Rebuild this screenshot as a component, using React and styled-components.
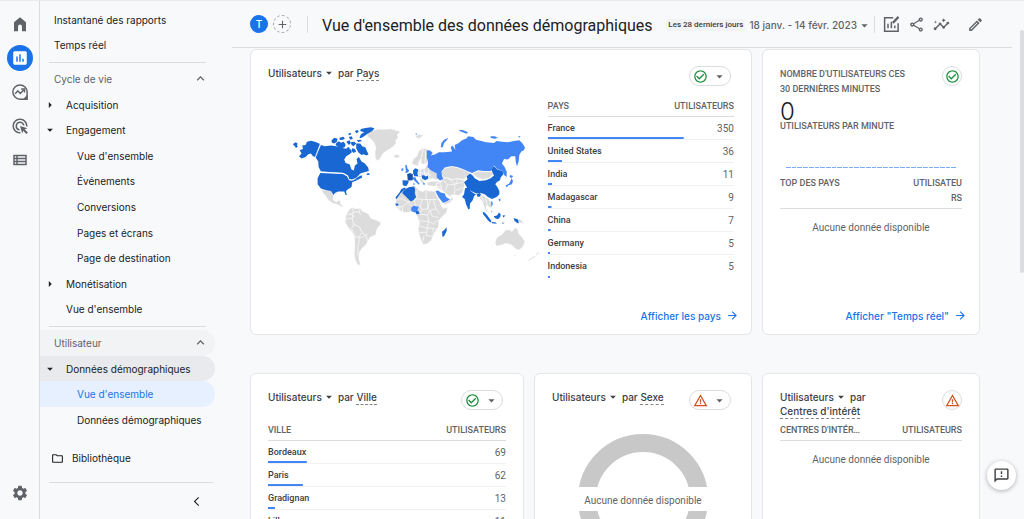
import React from 'react'
import styled, { createGlobalStyle } from 'styled-components'
import {
  MdInsertChart,
  MdAdsClick,
  MdOutlineViewList,
  MdSettings,
  MdOutlineShare,
  MdInsights,
  MdOutlineEdit,
  MdOutlineFeedback,
  MdOutlineFolder,
  MdArrowForward,
  MdCheckCircleOutline,
  MdWarningAmber,
  MdExpandLess,
  MdArrowDropDown,
  MdArrowRight,
  MdArrowBackIosNew,
  MdAdd,
} from 'react-icons/md'

const menu = [
  { label: 'Instantané des rapports', level: 0 },
  { label: 'Temps réel', level: 0 },
  { divider: true },
  { label: 'Cycle de vie', section: true },
  { label: 'Acquisition', level: 1, arrow: 'closed' },
  { label: 'Engagement', level: 1, arrow: 'open' },
  { label: "Vue d'ensemble", level: 2 },
  { label: 'Événements', level: 2 },
  { label: 'Conversions', level: 2 },
  { label: 'Pages et écrans', level: 2 },
  { label: 'Page de destination', level: 2 },
  { label: 'Monétisation', level: 1, arrow: 'closed' },
  { label: "Vue d'ensemble", level: 1 },
  { divider: true },
  { label: 'Utilisateur', section: true, tone: '#f1f3f4' },
  { label: 'Données démographiques', level: 1, arrow: 'open', tone: '#e8eaed' },
  { label: "Vue d'ensemble", level: 2, tone: '#e6f0fe', active: true },
  { label: 'Données démographiques', level: 2 },
]

const countries = [
  { name: 'France', users: 350 },
  { name: 'United States', users: 36 },
  { name: 'India', users: 11 },
  { name: 'Madagascar', users: 9 },
  { name: 'China', users: 7 },
  { name: 'Germany', users: 5 },
  { name: 'Indonesia', users: 5 },
]

const cities = [
  { name: 'Bordeaux', users: 69 },
  { name: 'Paris', users: 62 },
  { name: 'Gradignan', users: 13 },
  { name: 'Lille', users: 11 },
]

const HomeIcon = () => (
  <svg width="18" height="18" viewBox="0 0 24 24" fill="currentColor" aria-hidden="true">
    <path d="M4 21.500V9.600L12 3l8 6.600V21.500h-5.400v-6.300a2.600 2.600 0 0 0-5.200 0v6.300z" />
  </svg>
)

const ExploreIcon = () => (
  <svg width="18" height="18" viewBox="0 0 24 24" fill="none" stroke="currentColor" strokeWidth="2" aria-hidden="true">
    <path d="M12 21.500A9.500 9.500 0 1 1 21.500 12v9.500z" />
    <path d="M5.500 14.500l3.500-4 3.500 3.500 4.500-5" />
    <path d="M13.500 8h4.500v4.500" />
    <path d="M16 21.500l5.500-5.500v5.500z" fill="currentColor" stroke="none" />
  </svg>
)

const CustomizeIcon = () => (
  <svg width="18" height="18" viewBox="0 0 24 24" fill="none" stroke="currentColor" strokeWidth="2" aria-hidden="true">
    <path d="M15 3.500H3.500v18h18V11" />
    <path d="M8 17.500v-6M12.500 17.500V9M17 17.500v-3.500" />
    <path d="M14.500 10.500l7.500-8" strokeWidth="3" />
  </svg>
)

const WorldMap = () => (
  <MapSvg viewBox="-39 0 840 480" role="img" aria-label="Utilisateurs par pays">
    <g fill="#dcdcdc" stroke="#fff" strokeWidth="2">
      <path d="M258 56 262 50 276 46 292 42 310 43 330 41 346 46 361 50 350 58 352 68 345 76 346 86 336 96 322 105 308 114 302 124 296 134 288 138 283 128 282 112 285 98 280 84 270 72 260 66z" />
      <path d="M338 122l8-3 9 1 2 5-8 5-9-3z" />
      <path d="M402 64l12-6 14 2-8 8-6 4-6-4z" />
      <path d="M120 222 132 226 148 226 158 240 157 254 165 262 174 256 180 257 178 266 186 274 184 278 172 270 156 266 142 256 136 246 126 234z" />
      <path d="M204 284 214 277 222 281 238 280 246 290 262 296 270 310 288 316 300 322 299 330 289 342 285 360 268 368 262 378 254 392 244 400 236 412 234 430 240 452 230 450 223 436 220 416 222 392 220 366 212 350 200 336 192 320 194 306z" />
      <path d="M392 146 398 132 408 124 414 108 426 100 438 101 443 108 440 120 443 140 432 149 420 146 421 132 414 142 412 154 404 152 398 148z" />
      <path d="M406 162 416 164 432 160 438 150 448 156 454 166 468 176 480 184 476 194 464 194 454 190 448 194 444 186 434 180 424 184 410 178z" />
      <path d="M396 176l12 2 16 6-6 4-16-3zM416 190l10 2 6 14-6 2-8-10z" />
      <path d="M438 203l14-4 16 0 16 4-4 8-12 1-6 3-22-3z" />
      <path d="M364 222 384 216 404 213 412 224 426 230 434 225 448 228 462 229 470 246 480 266 486 280 501 278 498 292 484 306 474 318 474 334 466 348 458 362 452 376 440 387 428 390 422 380 414 358 412 342 416 326 410 306 404 296 394 290 372 294 356 288 343 270 346 252 356 236z" />
      <path d="M466 206 480 204 484 192 500 188 512 194 528 190 550 196 552 210 546 232 534 242 516 240 506 244 494 234 480 224 468 218z" />
      <path d="M486 263 508 256 510 244 518 252 508 264 492 270z" />
      <path d="M480 172 492 160 512 155 530 158 546 164 564 170 568 178 556 186 550 194 530 191 514 194 498 188 488 190z" />
      <path d="M574 176 592 168 610 170 632 170 638 178 624 190 606 194 588 188z" />
      <path d="M596 238 610 242 622 250 630 262 636 274 630 280 620 272 616 274 618 284 624 292 616 290 610 276 604 260 598 252z" />
      <path d="M713 312l10 4 8 11-8-2-10-1z" />
      <path d="M643 384 648 368 664 358 674 346 686 344 694 350 704 337 712 344 714 356 726 368 733 380 728 394 716 406 704 402 692 390 676 386 660 392 646 394z" />
      <path d="M698 420l8 1-3 6z" />
    </g>
    <g fill="none" stroke="#fff" strokeWidth="2">
      <path d="M214 280l4 12-16 10M218 292l20-2M238 282l-4 12 8 6M192 314l22-4 4-18M214 310l4 18 18 8 8 18 12 8 4 16M218 328l-6 14 12 24M222 366l20 2 18-10M236 372l-4 20-2 30M206 296l14 10M242 354l-10 16" />
      <path d="M346 252l20 0 16 10 26-10 28 2 0-26M410 226l-2 26M436 254l34 0M344 272l20 4 18-14M364 276l2 16M382 262l10 12 26 0 6-20M418 274l6 10 16-2 10-28M424 284l-8 14 24 2 8-14 18-4-8-28M440 300l4 20-30-2M444 320l14 8 14-14M416 334l24 6 4-20M440 340l14 0 16 4M440 340l-4 22 16 2M414 354l24-2M430 364l-4 16M452 364l8-4-4-18M466 282l10 14M448 286l6 18 20 4M404 298l14-2M356 276l2 12M440 254l2 30M400 250l4 22" />
      <path d="M418 164l2 18M430 162l2 18 18 2M446 156l-6 26M410 174l20 0 20 4M428 100l-8 34M436 104l-4 44" />
      <path d="M478 206l6 18M484 192l16 18 22-2 0 32M500 210l-6 18M522 208l24-6M504 192l18 14M530 192l-4 14M526 226l20-8M466 212l16 6M602 242l8 20M614 246l6 24" />
    </g>
    <g fill="#1967d2">
      <path d="M54 124 62 116 56 106 66 102 64 92 74 90 78 80 90 77 102 80 118 87 103 126 96 124 90 116 82 118 74 126 62 131zM38 86l6-4 6 4-2 5 3 4-6 4-4-6-5-4z" />
      <path d="M120 90 132 94 150 92 166 94 184 99 200 102 210 103 213 112 206 118 196 124 190 134 194 144 206 148 212 164 219 167 222 152 230 146 227 132 234 126 242 140 252 146 262 158 264 168 250 172 238 176 228 188 214 194 205 192 201 182 188 174 120 170 113 156 112 140 104 128z" />
      <path d="M226 86 238 86 244 94 254 98 258 108 263 118 257 122 248 118 242 120 232 112 226 100zM236 68 240 58 250 52 238 48 240 42 254 39 270 37 281 40 274 48 260 56 250 64 240 70zM166 84l8-5 6 4 8-3 6 8-2 8-8 4-10-2-10-8zM152 76l8-8 10 3-2 9-8 6-7-3zM196 80l10-4 4 8-6 6zM176 68l12-3 4 6-8 4-8-1zM204 66l8-2 4 7-8 3zM222 48l8-3 4 5-8 5zM210 82l10-2 6 6-8 8-6-4zM214 100l8 2 4 8-8 4-6-6zM196 100l8-4 3 6-7 4zM228 76l10-2 6 4-12 3zM202 56l8-3 1 5-7 3z" />
      <path d="M256 177l6-3 6 4-7 3z" />
      <path d="M118 174 186 177 198 184 206 196 216 196 228 188 242 180 244 188 228 196 214 202 212 216 200 224 195 230 198 240 194 240 190 230 172 230 162 234 158 240 150 228 136 226 120 221 110 208 110 190z" />
      <path d="M397 166 404 160 412 164 410 176 412 184 401 184 397 176zM365 196 384 197 382 206 376 214 366 211zM422 182l8-1 5 4 6-3 2 9-10 5-9-5z" />
      <path d="M364 234 372 224 384 217 400 215 403 224 402 236 406 246 398 256 390 260 378 248zM344 248l12-15 5-10 10-5 4 2-8 8-8 7-12 18zM343 267l9-1 1 6-7 1zM403 289l9-2 5 10-10 1zM484 350 490 346 497 337 498 348 490 364 485 366z" />
      <path d="M550 202 560 194 558 184 568 176 576 182 582 190 596 198 616 196 630 190 640 182 634 170 634 158 640 154 650 164 666 168 668 178 660 188 658 196 648 202 644 208 650 216 656 228 656 238 648 246 634 252 622 246 612 238 600 234 588 236 574 230 560 220z" />
      <path d="M553 220 564 218 570 228 580 236 586 238 580 244 576 256 568 266 567 282 563 284 556 268 552 252 544 246 550 238zM588 238l9-4 4 4-5 8-6-1z" />
      <path d="M606 291l6 2 8 9 6 8 6 8-2 5-8-6-6-8-8-10zM639 304l10-2 6-9 5 5-1 8-7 7-9-3zM632 321l14 2 2 4-14-2zM699 310l8 2 6 3 1 11-7-3-6-6zM666 301l8 1-6 7zM662 324l10 0-5 3z" />
    </g>
    <g fill="#4285f4">
      <path d="M438 106 448 107 456 114 450 122 464 118 474 112 492 112 514 110 510 98 514 92 520 98 524 106 522 90 532 86 544 76 558 70 562 64 578 66 586 74 602 78 616 82 640 84 648 78 664 80 682 82 700 78 716 76 726 86 733 98 730 106 722 110 716 120 714 140 709 155 705 138 704 124 692 124 682 134 670 132 664 146 672 156 678 170 678 186 670 180 666 168 650 162 640 152 632 168 610 168 592 166 574 174 560 168 546 162 530 156 512 153 492 158 482 170 484 184 488 192 478 197 468 188 468 176 450 166 440 156 442 140 438 128z" />
      <path d="M480 97 482 84 490 74 503 68 498 76 490 84 486 97zM536 44l12 2 14 6-4 4-12-4-10-4zM630 64l12 0 10 4-10 3-12-2zM404 54l5 2-3 4zM712 64l8 0-4 4z" />
      <path d="M373 150l5 1 2 10 5 6-3 6-8 1 1-9zM362 161l6-1-1 7-5 2zM396 187l8 0 2 6 7 9 4 5-4 2-8-8-8-8zM398 204l3 0 0 6-3 0zM428 203l4 2-1 6-4-3z" />
      <path d="M464 229l8-2 8 6 12 3 4 10 12 8-10 6-12 4-4-6-8-10zM391 279l7-6 10 2 6-1-2 8-5 9-7 1-8-3z" />
      <path d="M688 180l10 3-6 6-5-3zM693 190l4 8-3 10-10 3-6 6-3-5 11-6zM654 252l5-1 0 9-4-2zM630 258l6 4 0 8-5 4 1-9zM632 286l3 5-2 3zM631 246l5 1-3 4z" />
    </g>
    <path d="M379 178l8-4 9 4 0 8 0 9-7 2-8-1z" fill="#174ea6" />
    <path d="M118 86l-15 41M116 171l70 4 14 8 4 11 8 3 12-5 8-8 12-5 14-3" fill="none" stroke="#fff" strokeWidth="2" />
    <path d="M744 438l12-9 8-4M766 422l8-10" fill="none" stroke="#dcdcdc" strokeWidth="3" />
  </MapSvg>
)

const Status = ({ warning, menu }) => (
  <StatusButton type="button" $wide={menu} $warning={warning} aria-label="Qualité des données">
    {warning ? <MdWarningAmber size={15} /> : <MdCheckCircleOutline size={15} />}
    {menu && <MdArrowDropDown size={15} color="#5f6368" />}
  </StatusButton>
)

const CardHeader = ({ dimension, warning, menu = true }) => (
  <Header>
    <h2>
      <MetricButton type="button">
        Utilisateurs
        <MdArrowDropDown size={14} />
      </MetricButton>
      par <Dimension>{dimension}</Dimension>
    </h2>
    <Status warning={warning} menu={menu} />
  </Header>
)

const DataTable = ({ title, rows, total }) => (
  <Table>
    <thead>
      <tr>
        <th scope="col">{title}</th>
        <th scope="col">UTILISATEURS</th>
      </tr>
    </thead>
    <tbody>
      {rows.map(({ name, users }) => (
        <tr key={name} style={{ backgroundSize: `${(users / total) * 100}% 2px` }}>
          <td>{name}</td>
          <td>{users}</td>
        </tr>
      ))}
    </tbody>
  </Table>
)

export default function App() {
  return (
    <Page>
      <GlobalStyle />
      <Rail aria-label="Navigation principale">
        <RailLink href="#accueil" aria-label="Accueil"><HomeIcon /></RailLink>
        <RailLink href="#rapports" aria-label="Rapports" $active><MdInsertChart size={18} /></RailLink>
        <RailLink href="#explorer" aria-label="Explorer"><ExploreIcon /></RailLink>
        <RailLink href="#publicite" aria-label="Publicité"><MdAdsClick size={18} /></RailLink>
        <RailLink href="#configurer" aria-label="Configurer"><MdOutlineViewList size={18} /></RailLink>
        <RailLink href="#admin" aria-label="Administration" $last><MdSettings size={18} /></RailLink>
      </Rail>

      <Sidebar aria-label="Rapports">
        <Menu>
          {menu.map((item, index) => {
            if (item.divider) return <Divider key={index} role="separator" />
            return (
              <MenuItem key={index}>
                {item.section ? (
                  <SectionButton type="button" $tone={item.tone} aria-expanded="true">
                    {item.label}
                    <MdExpandLess size={15} />
                  </SectionButton>
                ) : (
                  <MenuLink href="#rapport" $level={item.level} $tone={item.tone} $active={item.active}>
                    <Arrow>
                      {item.arrow === 'open' && <MdArrowDropDown size={14} />}
                      {item.arrow === 'closed' && <MdArrowRight size={14} />}
                    </Arrow>
                    {item.label}
                  </MenuLink>
                )}
              </MenuItem>
            )
          })}
          <MenuItem $library>
            <LibraryLink href="#bibliotheque">
              <MdOutlineFolder size={13} />
              Bibliothèque
            </LibraryLink>
          </MenuItem>
        </Menu>
        <SidebarFooter>
          <IconButton type="button" aria-label="Réduire"><MdArrowBackIosNew size={11} /></IconButton>
        </SidebarFooter>
      </Sidebar>

      <Main>
        <TopBar>
          <Avatar>T</Avatar>
          <AddButton type="button" aria-label="Ajouter une comparaison"><MdAdd size={13} /></AddButton>
          <Rule />
          <h1>Vue d'ensemble des données démographiques</h1>
          <Badge>Les 28 derniers jours</Badge>
          <DateButton type="button">
            18 janv. - 14 févr. 2023
            <MdArrowDropDown size={15} />
          </DateButton>
          <Rule />
          <Tools>
            <IconButton type="button" aria-label="Personnaliser"><CustomizeIcon /></IconButton>
            <IconButton type="button" aria-label="Partager"><MdOutlineShare size={17} /></IconButton>
            <IconButton type="button" aria-label="Insights"><MdInsights size={17} /></IconButton>
          </Tools>
          <IconButton type="button" aria-label="Modifier"><MdOutlineEdit size={17} /></IconButton>
        </TopBar>

        <Cards>
          <Card $span={2}>
            <CardHeader dimension="Pays" />
            <MapLayout>
              <WorldMap />
              <DataTable title="PAYS" rows={countries} total={478} />
            </MapLayout>
            <CardLink href="#pays">
              Afficher les pays
              <MdArrowForward size={13} />
            </CardLink>
          </Card>

          <Card>
            <Header>
              <Caption as="h2">NOMBRE D'UTILISATEURS CES 30 DERNIÈRES MINUTES</Caption>
              <Status />
            </Header>
            <BigNumber>0</BigNumber>
            <Caption>UTILISATEURS PAR MINUTE</Caption>
            <Minutes>
              {Array.from({ length: 30 }, (_, i) => <i key={i} />)}
            </Minutes>
            <Table>
              <thead>
                <tr>
                  <th scope="col">TOP DES PAYS</th>
                  <th scope="col">UTILISATEU<br />RS</th>
                </tr>
              </thead>
            </Table>
            <Empty>Aucune donnée disponible</Empty>
            <CardLink href="#temps-reel">
              Afficher "Temps réel"
              <MdArrowForward size={13} />
            </CardLink>
          </Card>

          <Card>
            <CardHeader dimension="Ville" />
            <DataTable title="VILLE" rows={cities} total={423} />
          </Card>

          <Card>
            <CardHeader dimension="Sexe" warning />
            <Donut>
              <svg width="130" height="130" viewBox="0 0 130 130" aria-hidden="true">
                <circle cx="65" cy="65" r="56" fill="none" stroke="#c8c8c8" strokeWidth="18" />
              </svg>
              <span>Aucune donnée disponible</span>
            </Donut>
          </Card>

          <Card>
            <CardHeader dimension="Centres d'intérêt" warning menu={false} />
            <Table>
              <thead>
                <tr>
                  <th scope="col">CENTRES D'INTÉR…</th>
                  <th scope="col">UTILISATEURS</th>
                </tr>
              </thead>
            </Table>
            <Empty>Aucune donnée disponible</Empty>
          </Card>
        </Cards>
      </Main>

      <ScrollThumb />
      <Feedback type="button" aria-label="Commentaires"><MdOutlineFeedback size={17} /></Feedback>
    </Page>
  )
}

const GlobalStyle = createGlobalStyle`
  * {
    box-sizing: border-box;
  }
  body {
    margin: 0;
    background: #f8f9fb;
    color: #202124;
    font-family: Inter, Roboto, sans-serif;
    font-size: 10px;
  }
  h1, h2, p, ul {
    margin: 0;
    padding: 0;
    font-weight: 400;
  }
  button {
    padding: 0;
    border: 0;
    background: none;
    font: inherit;
    color: inherit;
    cursor: pointer;
  }
  a {
    color: inherit;
    text-decoration: none;
  }
  svg {
    flex-shrink: 0;
  }
`;

const Page = styled.div`
  position: relative;
  display: flex;
  height: 100vh;
  overflow: hidden;
  border-top: 1px solid #e8eaed;
`;

const Rail = styled.nav`
  display: flex;
  flex-direction: column;
  align-items: center;
  gap: 8px;
  flex: 0 0 40px;
  padding: 10px 0 13px;
  border-right: 1px solid #dadce0;
  color: #5f6368;
`;

const RailLink = styled.a`
  display: grid;
  place-items: center;
  width: 26px;
  height: 26px;
  border-radius: 50%;
  margin-top: ${({ $last }) => ($last ? 'auto' : '0')};
  background: ${({ $active }) => ($active ? '#1a73e8' : 'transparent')};
  color: ${({ $active }) => ($active ? '#fff' : 'inherit')};
`;

const Sidebar = styled.nav`
  display: flex;
  flex-direction: column;
  flex: 0 0 192px;
  padding: 6px 17px 0 0;
  font-weight: 500;
`;

const Menu = styled.ul`
  display: flex;
  flex-direction: column;
  flex: 1;
  list-style: none;
`;

const MenuItem = styled.li`
  display: flex;
  flex: 1 1 24px;
  margin-top: ${({ $library }) => ($library ? '13px' : '0')};
`;

const Divider = styled.li`
  height: 1px;
  margin: 4px 9px 3px;
  background: #dadce0;
`;

const MenuLink = styled.a`
  display: flex;
  align-items: center;
  flex: 1;
  padding-left: ${({ $level }) => [0, 12, 23][$level]}px;
  border-radius: 0 13px 13px 0;
  background: ${({ $tone }) => $tone || 'transparent'};
  color: ${({ $active }) => ($active ? '#1a73e8' : 'inherit')};
  white-space: nowrap;
`;

const Arrow = styled.span`
  display: flex;
  width: 14px;
  svg {
    margin-left: -9px;
  }
`;

const SectionButton = styled.button`
  display: flex;
  align-items: center;
  justify-content: space-between;
  flex: 1;
  padding: 0 7px 0 14px;
  border-radius: 0 13px 13px 0;
  background: ${({ $tone }) => $tone || 'transparent'};
  color: #5f6368;
`;

const LibraryLink = styled.a`
  display: flex;
  align-items: center;
  gap: 8px;
  padding-left: 11px;
`;

const SidebarFooter = styled.div`
  display: flex;
  justify-content: flex-end;
  margin: 11px 2px 0 9px;
  padding: 13px 11px 12px 0;
  border-top: 1px solid #dadce0;
  button {
    color: #202124;
  }
`;

const IconButton = styled.button`
  display: grid;
  place-items: center;
  color: #5f6368;
`;

const Main = styled.main`
  flex: 1;
  min-width: 0;
`;

const TopBar = styled.header`
  display: flex;
  align-items: center;
  height: 47px;
  margin-right: 12px;
  padding: 0 28px 0 18px;
  border-bottom: 1px solid #dadce0;
  h1 {
    margin: 0 auto 0 14px;
    padding-top: 4px;
    font-family: Roboto, sans-serif;
    font-size: 16px;
    line-height: 24px;
    white-space: nowrap;
  }
`;

const Avatar = styled.span`
  display: grid;
  place-items: center;
  flex: 0 0 18px;
  height: 18px;
  border-radius: 50%;
  background: #1a73e8;
  color: #fff;
  font-weight: 500;
`;

const AddButton = styled.button`
  display: grid;
  place-items: center;
  flex: 0 0 18px;
  height: 18px;
  margin: 0 16px 0 5px;
  border: 1px dashed #9aa0a6;
  border-radius: 50%;
  color: #5f6368;
`;

const Rule = styled.span`
  flex: 0 0 1px;
  height: 17px;
  background: #dadce0;
`;

const Badge = styled.span`
  margin-top: 2px;
  padding: 0 2px;
  border-radius: 2px;
  background: #f1f3f4;
  color: #3c4043;
  font-family: Roboto, sans-serif;
  font-size: 8px;
  font-weight: 500;
  line-height: 12px;
  white-space: nowrap;
`;

const DateButton = styled.button`
  display: flex;
  align-items: center;
  margin: 2px 2px 0 4px;
  color: #5f6368;
  font-weight: 500;
  white-space: nowrap;
`;

const Tools = styled.div`
  display: flex;
  gap: 8px;
  margin: 0 17px 0 7px;
`;

const Cards = styled.div`
  display: grid;
  grid-template-columns: 274fr 218fr 218fr;
  gap: 38px 10px;
  padding: 1px 44px 0 18px;
`;

const Card = styled.section`
  display: flex;
  flex-direction: column;
  min-width: 0;
  min-height: 286px;
  grid-column: span ${({ $span }) => $span || 1};
  padding: 16px 17px 12px;
  border: 1px solid #e4e6ea;
  border-radius: 6px;
  background: #fff;
`;

const Header = styled.div`
  display: flex;
  justify-content: space-between;
  height: 32px;
  h2 {
    color: #3c4043;
    font-size: 10px;
    font-weight: 500;
    line-height: 14px;
  }
`;

const MetricButton = styled.button`
  display: inline-flex;
  align-items: center;
  margin-right: 2px;
  vertical-align: top;
  line-height: 14px;
`;

const Dimension = styled.span`
  display: inline-block;
  border-bottom: 1px dashed #80868b;
`;

const StatusButton = styled.button`
  display: flex;
  align-items: center;
  justify-content: center;
  gap: 4px;
  flex: 0 0 ${({ $wide }) => ($wide ? '42px' : '20px')};
  height: 20px;
  margin-right: ${({ $wide }) => ($wide ? '3px' : '0')};
  border: 1px solid #dadce0;
  border-radius: 10px;
  color: ${({ $warning }) => ($warning ? '#d0531f' : '#1e8e3e')};
`;

const MapLayout = styled.div`
  display: grid;
  grid-template-columns: 3fr 2fr;
  align-items: start;
`;

const MapSvg = styled.svg`
  width: 100%;
  margin-top: 17px;
`;

const Table = styled.table`
  width: 100%;
  border-collapse: collapse;
  font-family: Roboto, sans-serif;
  th {
    padding: 1px 0 2px;
    border-bottom: 1px solid #dadce0;
    color: #5f6368;
    font-size: 9px;
    font-weight: 500;
    line-height: 15px;
    text-align: left;
    vertical-align: top;
    white-space: nowrap;
  }
  th:last-child, td:last-child {
    text-align: right;
  }
  tbody tr {
    height: 23px;
    border-bottom: 1px solid #eef0f1;
    background: linear-gradient(#4285f4, #4285f4) left bottom no-repeat;
  }
  tbody tr:last-child {
    border-bottom: 0;
  }
  td {
    padding: 0;
    color: #3c4043;
    font-size: 9px;
    font-weight: 500;
  }
  td:last-child {
    color: #5f6368;
    font-size: 10px;
    font-weight: 400;
  }
`;

const CardLink = styled.a`
  display: flex;
  align-items: center;
  justify-content: flex-end;
  gap: 5px;
  margin: auto -5px 0 0;
  color: #1a73e8;
  font-weight: 500;
`;

const Caption = styled.p`
  color: #5f6368;
  font-family: Roboto, sans-serif;
  font-size: 9px;
  font-weight: 500;
  line-height: 15px;
  ${Header} & {
    max-width: 130px;
    padding-top: 1px;
    color: #5f6368;
    font-size: 9px;
    line-height: 15px;
  }
`;

const BigNumber = styled.p`
  margin-top: 7px;
  font-size: 24px;
  font-weight: 300;
  line-height: 14px;
`;

const Minutes = styled.div`
  display: flex;
  gap: 1px;
  height: 34px;
  margin: 0 6px 7px;
  align-items: flex-end;
  i {
    flex: 1;
    height: 1px;
    background: #7baaf7;
  }
`;

const Empty = styled.p`
  margin-top: 12px;
  color: #5f6368;
  font-family: Roboto, sans-serif;
  line-height: 14px;
  text-align: center;
`;

const Donut = styled.div`
  display: grid;
  justify-items: center;
  align-items: center;
  margin-top: 12px;
  svg, span {
    grid-area: 1 / 1;
  }
  span {
    width: 100%;
    padding-top: 4px;
    background: #fff;
    color: #5f6368;
    font-family: Roboto, sans-serif;
    line-height: 20px;
    text-align: center;
  }
`;

const ScrollThumb = styled.div`
  position: absolute;
  top: 29px;
  right: 0;
  width: 4px;
  height: 47%;
  border-radius: 2px;
  background: #dadce0;
`;

const Feedback = styled.button`
  position: absolute;
  right: 8px;
  bottom: 29px;
  display: grid;
  place-items: center;
  width: 29px;
  height: 29px;
  border-radius: 50%;
  background: #fff;
  color: #3c4043;
  box-shadow: 0 1px 4px rgba(60, 64, 67, 0.4);
`;
